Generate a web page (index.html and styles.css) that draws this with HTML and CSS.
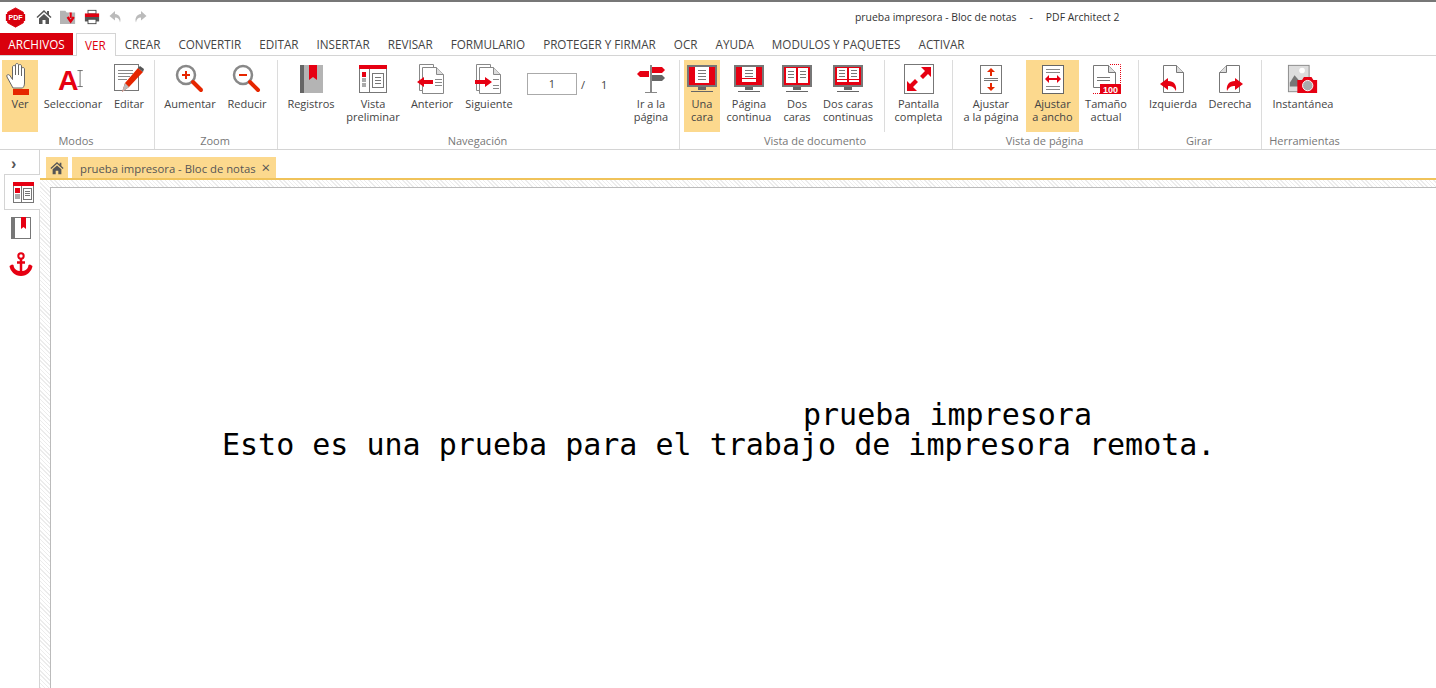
FILE: index.html
```html
<!DOCTYPE html>
<html lang="es">
<head>
  <meta charset="UTF-8" />
  <title>prueba impresora - Bloc de notas - PDF Architect 2</title>
  <link rel="stylesheet" href="styles.css">
</head>
<body>
  <svg class="sprites" width="0" height="0">
    <symbol id="i-house" viewBox="0 0 16 16"><path d="M8 1 0.5 8l1 1L8 3l6.500 6 1-1-2.500-2.300V2h-2v1.900z" fill="#555"/><path d="M3 9.500 8 5l5 4.500V15H9.500v-4h-3v4H3z" fill="#555"/></symbol>
  </svg>

  <!-- barra de titulo -->
  <div class="titlebar">
    <svg class="logo" viewBox="0 0 24 24"><path d="M12 1l9 5v12l-9 5-9-5V6z" fill="#d9000d" stroke="#d9000d" stroke-linejoin="round"/><rect x="1" y="8" width="22" height="8" fill="#d9000d"/><text x="12" y="15" class="logo-text">PDF</text></svg>
    <svg class="qa" viewBox="0 0 16 16"><use href="#i-house"/></svg>
    <svg class="qa" viewBox="0 0 18 16"><path d="M0 1h6l1.500 2H17v13H0z" fill="#b4b4b4"/><path d="M10 4h3v5h-3z" fill="#fff"/><path d="M12 3v6M8.500 8 12 13l3.500-5" fill="none" stroke="#e00010" stroke-width="2.500"/></svg>
    <svg class="qa" viewBox="0 0 18 16"><rect x="4.500" y="0.500" width="9" height="4" fill="#fff" stroke="#444"/><rect x="1" y="4" width="16" height="4" fill="#e00010"/><path d="M1 8h16v5H1z" fill="#555"/><rect x="4.500" y="10.500" width="9" height="5" fill="#fff" stroke="#444"/></svg>
    <svg class="qa" viewBox="0 0 16 16"><path d="M7 2 1.500 7 7 11.500V8.500c3 0 4.500 1.500 5 5 1.500-4-.5-8-5-8.500z" fill="#bbb"/></svg>
    <svg class="qa" viewBox="0 0 16 16"><path d="M9 2l5.500 5L9 11.500V8.500c-3 0-4.500 1.500-5 5-1.500-4 .5-8 5-8.500z" fill="#bbb"/></svg>
    <div class="window-title"><span>prueba impresora - Bloc de notas</span><span class="dash">-</span><span>PDF Architect 2</span></div>
  </div>

  <!-- pestanas -->
  <nav class="tabs">
    <span class="tab-file">ARCHIVOS</span>
    <span class="tab tab-on">VER</span>
    <span class="tab">CREAR</span>
    <span class="tab">CONVERTIR</span>
    <span class="tab">EDITAR</span>
    <span class="tab">INSERTAR</span>
    <span class="tab">REVISAR</span>
    <span class="tab">FORMULARIO</span>
    <span class="tab">PROTEGER Y FIRMAR</span>
    <span class="tab">OCR</span>
    <span class="tab">AYUDA</span>
    <span class="tab">MODULOS Y PAQUETES</span>
    <span class="tab">ACTIVAR</span>
  </nav>

  <!-- cinta -->
  <section class="ribbon">
    <div class="group g-modos">
      <div class="btns">
        <div class="btn w-ver on">
          <svg class="ico" viewBox="0 0 32 32"><path d="M9 25 3 14c-1-2 1-3 2.500-2l3 4.500V4c0-2 3-2 3 0v8-10c0-2 3-2 3 0v10-9c0-2 3-2 3 0v10-7c0-2 3-2 3 0v14c0 3-1 4-2 5z" fill="#fff" stroke="#666"/><rect x="9" y="26" width="16" height="6" fill="#e62600"/></svg>
          <span>Ver</span>
        </div>
        <div class="btn w-sel">
          <svg class="ico" viewBox="0 0 36 32"><text x="1" y="28" class="big-a">A</text><path d="M23 6.500h6M23 24.500h6M26 6v19" stroke="#666" fill="none"/></svg>
          <span>Seleccionar</span>
        </div>
        <div class="btn w-edit">
          <svg class="ico" viewBox="0 0 32 32"><rect x="1.500" y="1.500" width="24" height="26" fill="#fff" stroke="#777"/><path d="M5 7.500h15M5 10.500h15M5 13.500h12M5 16.500h9" stroke="#888"/><path d="M9 29l3-9L25 5l5 4-14 15z" fill="#e62600"/><path d="M9 29l3-9 4 4z" fill="#bbb"/><path d="M25 5l2-2 4 3-1 3z" fill="#555"/></svg>
          <span>Editar</span>
        </div>
      </div>
      <div class="group-name">Modos</div>
    </div>

    <div class="group g-zoom">
      <div class="btns">
        <div class="btn w-aum">
          <svg class="ico" viewBox="0 0 32 32"><circle cx="12" cy="12" r="9" fill="#fff" stroke="#888" stroke-width="2.500"/><path d="M12 8v8M8 12h8" stroke="#e62600" stroke-width="2"/><path d="M19 19l8 8" stroke="#e62600" stroke-width="4" stroke-linecap="round"/></svg>
          <span>Aumentar</span>
        </div>
        <div class="btn w-red">
          <svg class="ico" viewBox="0 0 32 32"><circle cx="12" cy="12" r="9" fill="#fff" stroke="#888" stroke-width="2.500"/><path d="M8 12h8" stroke="#e62600" stroke-width="2"/><path d="M19 19l8 8" stroke="#e62600" stroke-width="4" stroke-linecap="round"/></svg>
          <span>Reducir</span>
        </div>
      </div>
      <div class="group-name">Zoom</div>
    </div>

    <div class="group g-nav">
      <div class="btns">
        <div class="btn w-reg">
          <svg class="ico" viewBox="0 0 32 32"><rect x="5" y="2" width="23" height="28" fill="#b4b4b4"/><rect x="5" y="2" width="4" height="28" fill="#666"/><path d="M14 2h8v15l-4-3-4 3z" fill="#e60012"/></svg>
          <span>Registros</span>
        </div>
        <div class="btn w-prev">
          <svg class="ico" viewBox="0 0 32 32"><rect x="2.500" y="4.500" width="27" height="25" fill="#fff" stroke="#777"/><rect x="2" y="2" width="28" height="4" fill="#e60012"/><rect x="5" y="9" width="4" height="5" fill="#e60012"/><rect x="5" y="15" width="4" height="4" fill="#aaa"/><rect x="5" y="20" width="4" height="4" fill="#aaa"/><path d="M12.500 6v23" stroke="#777"/><rect x="15.500" y="10.500" width="11" height="14" fill="#fff" stroke="#777"/><path d="M18 14.500h6M18 17.500h6M18 20.500h6" stroke="#777"/></svg>
          <span>Vista<br>preliminar</span>
        </div>
        <div class="btn w-ant">
          <svg class="ico" viewBox="0 0 32 32"><path d="M3.500 1.500h14v26h-14z" fill="#fff" stroke="#888"/><path d="M6.500 4.500h14l7 7v19h-21z" fill="#fff" stroke="#888"/><path d="M20.500 4.500v7h7" fill="#ddd" stroke="#888"/><path d="M19 16.500h7M19 19.500h7M19 22.500h7" stroke="#888"/><path d="M1 19l7-5v3h9v4H8v3z" fill="#e60012"/></svg>
          <span>Anterior</span>
        </div>
        <div class="btn w-sig">
          <svg class="ico" viewBox="0 0 32 32"><path d="M3.500 1.500h14v26h-14z" fill="#fff" stroke="#888"/><path d="M6.500 4.500h14l7 7v19h-21z" fill="#fff" stroke="#888"/><path d="M20.500 4.500v7h7" fill="#ddd" stroke="#888"/><path d="M20 16.500h6M20 22.500h6M20 25.500h6" stroke="#888"/><path d="M2 17h10v-3l7 5-7 5v-3H2z" fill="#e60012"/></svg>
          <span>Siguiente</span>
        </div>
        <div class="pager"><span class="page-box">1</span><span class="slash">/</span><span class="page-total">1</span></div>
        <div class="btn w-ir">
          <svg class="ico" viewBox="0 0 32 32"><path d="M15 2h2v28h-2z" fill="#888"/><path d="M10 29.500h12" stroke="#888"/><path d="M17 4h10l3 3-3 3H17z" fill="#e60012"/><path d="M14 8H5l-3 3 3 3h9z" fill="#e60012"/><path d="M17 12h10l3 3-3 3H17z" fill="#666"/></svg>
          <span>Ir a la<br>página</span>
        </div>
      </div>
      <div class="group-name">Navegación</div>
    </div>

    <div class="group g-doc">
      <div class="btns">
        <div class="btn w-una on">
          <svg class="ico" viewBox="0 0 32 32"><rect x="1" y="2" width="30" height="22" fill="#777"/><rect x="3" y="4" width="26" height="18" fill="#e60012"/><rect x="9" y="4" width="14" height="16" fill="#fff"/><path d="M12 7.500h8M12 10.500h8M12 13.500h8M12 16.500h8" stroke="#777"/><path d="M12 24h8v3h-8z" fill="#666"/><path d="M5 28.500h22" stroke="#666"/></svg>
          <span>Una<br>cara</span>
        </div>
        <div class="btn w-pag">
          <svg class="ico" viewBox="0 0 32 32"><rect x="1" y="2" width="30" height="22" fill="#777"/><rect x="3" y="4" width="26" height="18" fill="#e60012"/><rect x="9" y="4" width="14" height="11" fill="#fff"/><rect x="9" y="16" width="14" height="3" fill="#fff"/><path d="M12 7.500h8M12 10.500h8M12 13.500h8" stroke="#777"/><path d="M12 24h8v3h-8z" fill="#666"/><path d="M5 28.500h22" stroke="#666"/></svg>
          <span>Página<br>continua</span>
        </div>
        <div class="btn w-dos">
          <svg class="ico" viewBox="0 0 32 32"><rect x="1" y="2" width="30" height="22" fill="#777"/><rect x="3" y="4" width="26" height="18" fill="#e60012"/><rect x="5" y="5" width="10" height="15" fill="#fff"/><rect x="17" y="5" width="10" height="15" fill="#fff"/><path d="M7 8.500h6M7 11.500h6M7 14.500h6M19 8.500h6M19 11.500h6M19 14.500h6" stroke="#777"/><path d="M12 24h8v3h-8z" fill="#666"/><path d="M5 28.500h22" stroke="#666"/></svg>
          <span>Dos<br>caras</span>
        </div>
        <div class="btn w-dosc">
          <svg class="ico" viewBox="0 0 32 32"><rect x="1" y="2" width="30" height="22" fill="#777"/><rect x="3" y="4" width="26" height="18" fill="#e60012"/><rect x="5" y="5" width="10" height="11" fill="#fff"/><rect x="17" y="5" width="10" height="11" fill="#fff"/><rect x="5" y="17" width="10" height="2" fill="#fff"/><rect x="17" y="17" width="10" height="2" fill="#fff"/><path d="M7 7.500h6M7 10.500h6M7 13.500h6M19 7.500h6M19 10.500h6M19 13.500h6" stroke="#777"/><path d="M12 24h8v3h-8z" fill="#666"/><path d="M5 28.500h22" stroke="#666"/></svg>
          <span>Dos caras<br>continuas</span>
        </div>
        <div class="btn w-pant">
          <svg class="ico" viewBox="0 0 32 32"><rect x="1.500" y="1.500" width="29" height="29" fill="#fff" stroke="#777"/><path d="M18 4h10v10l-3-3-5 5-3-3 5-5zM14 28H4V18l3 3 5-5 3 3-5 5z" fill="#e60012"/></svg>
          <span>Pantalla<br>completa</span>
        </div>
      </div>
      <div class="group-name">Vista de documento</div>
    </div>

    <div class="group g-pag">
      <div class="btns">
        <div class="btn w-ajp">
          <svg class="ico" viewBox="0 0 32 32"><rect x="5.500" y="2.500" width="21" height="28" fill="#fff" stroke="#777"/><path d="M9 15.500h14M9 17.500h14" stroke="#777"/><path d="M16 5l4 4h-3v4h-2V9h-3zM16 28l4-4h-3v-4h-2v4h-3z" fill="#e62600"/></svg>
          <span>Ajustar<br>a la página</span>
        </div>
        <div class="btn w-aja on">
          <svg class="ico" viewBox="0 0 32 32"><rect x="5.500" y="2.500" width="21" height="28" fill="#fff" stroke="#666"/><path d="M9 6.500h14M9 9.500h14M9 23.500h14M9 26.500h14" stroke="#888"/><path d="M8 16l4-4v3h8v-3l4 4-4 4v-3h-8v3z" fill="#e60012"/></svg>
          <span>Ajustar<br>a ancho</span>
        </div>
        <div class="btn w-tam">
          <svg class="ico" viewBox="0 0 32 32"><path d="M3.500 2.500h15l7 7v15h-22z" fill="#fff" stroke="#777"/><path d="M18.500 2.500v7h7" fill="#ddd" stroke="#777"/><path d="M7 14.500h13M7 17.500h13" stroke="#777"/><path d="M20 1.500h10.500V20M3 30.500h7" fill="none" stroke="#e60012" stroke-dasharray="1 1"/><rect x="10" y="21" width="21" height="10" fill="#e60012"/><text x="20.500" y="29.500" class="hundred">100</text></svg>
          <span>Tamaño<br>actual</span>
        </div>
      </div>
      <div class="group-name">Vista de página</div>
    </div>

    <div class="group g-girar">
      <div class="btns">
        <div class="btn w-izq">
          <svg class="ico" viewBox="0 0 32 32"><path d="M6.500 2.500h13l7 7v20h-20z" fill="#fff" stroke="#777"/><path d="M19.500 2.500v7h7" fill="#ddd" stroke="#777"/><path d="M11 15l-8 6 8 6v-4c4 0 6 1 8 5 1-6-2-10-8-10z" fill="#e60012"/></svg>
          <span>Izquierda</span>
        </div>
        <div class="btn w-der">
          <svg class="ico" viewBox="0 0 32 32"><path d="M12.500 2.500h13v27h-20v-20z" fill="#fff" stroke="#777"/><path d="M12.500 2.500v7h-7" fill="#ddd" stroke="#777"/><path d="M21 15l8 6-8 6v-4c-4 0-6 1-8 5-1-6 2-10 8-10z" fill="#e60012"/></svg>
          <span>Derecha</span>
        </div>
      </div>
      <div class="group-name">Girar</div>
    </div>

    <div class="group g-herr">
      <div class="btns">
        <div class="btn w-inst">
          <svg class="ico" viewBox="0 0 34 32"><rect x="1.500" y="1.500" width="22" height="28" fill="#ddd" stroke="#888"/><circle cx="16" cy="7" r="3" fill="#fff"/><path d="M3 20l5-8 6 7v5H3z" fill="#777"/><path d="M11 17h5l2-3h8l2 3h4v14H11z" fill="#e60012"/><circle cx="22" cy="23" r="5.500" fill="#aaa" stroke="#fff"/></svg>
          <span>Instantánea</span>
        </div>
      </div>
      <div class="group-name">Herramientas</div>
    </div>
  </section>

  <div class="workspace">
    <!-- panel lateral -->
    <aside class="side">
      <div class="side-toggle">›</div>
      <div class="side-item side-on">
        <svg class="side-ico" viewBox="0 0 24 24"><rect x="2.500" y="4.500" width="20" height="18" fill="#fff" stroke="#777"/><rect x="2" y="2" width="21" height="4" fill="#e60012"/><rect x="4" y="8" width="5" height="5" fill="#e60012"/><rect x="4" y="14" width="5" height="5" fill="#aaa"/><path d="M10.500 6v16" stroke="#777"/><rect x="12.500" y="8.500" width="8" height="11" fill="#fff" stroke="#777"/><path d="M14 11.500h5M14 13.500h5M14 15.500h5" stroke="#777"/></svg>
      </div>
      <div class="side-item">
        <svg class="side-ico" viewBox="0 0 24 24"><rect x="2" y="1" width="3" height="22" fill="#777"/><rect x="5.500" y="1.500" width="16" height="21" fill="#fff" stroke="#777"/><path d="M12 1h5v12l-2.500-2-2.500 2z" fill="#e60012"/></svg>
      </div>
      <div class="side-item">
        <svg class="side-ico" viewBox="0 0 24 24"><circle cx="12" cy="4" r="2.700" fill="none" stroke="#e60012" stroke-width="2"/><path d="M12 6.500V22M8 10.500h8" stroke="#e60012" stroke-width="2.500"/><path d="M0.500 14l2.500-1.500 1.500.5c.5 4 3 6 7.500 6s7-2 7.500-6l1.500-.5L23.500 14c-.5 5-5.500 10-11.500 10S1 19 .5 14z" fill="#e60012"/></svg>
      </div>
    </aside>

    <main class="doc-area">
      <div class="doc-tabs">
        <span class="doc-home"><svg class="doc-home-ico" viewBox="0 0 16 16"><use href="#i-house"/></svg></span>
        <span class="doc-tab">prueba impresora - Bloc de notas<b class="close">×</b></span>
      </div>
      <div class="doc-back">
        <div class="page">
          <p class="print-title">prueba impresora</p>
          <p class="print-line">Esto es una prueba para el trabajo de impresora remota.</p>
        </div>
      </div>
    </main>
  </div>
</body>
</html>
```

FILE: styles.css
```css
* {
  box-sizing: border-box;
}
html, body {
  height: 100%;
}
body {
  margin: 0;
  overflow: hidden;
  display: flex;
  flex-direction: column;
  background: #fff;
  color: #444;
  font-family: "Open Sans", "Noto Sans", sans-serif;
  font-size: 11px;
}
.sprites {
  position: absolute;
}

/* barra de titulo */
.titlebar {
  height: 33px;
  flex: none;
  display: flex;
  align-items: center;
  padding: 0 0 1px 5px;
  border-top: 2px solid #777;
}
.logo {
  width: 21px;
  height: 21px;
  margin-right: 10px;
}
.logo-text {
  fill: #fff;
  font: bold 8px "Liberation Sans", sans-serif;
  text-anchor: middle;
}
.qa {
  width: 16px;
  height: 16px;
  margin-right: 8px;
}
.window-title {
  margin-left: 699px;
  display: flex;
  font-size: 10.4px;
  color: #333;
}
.dash {
  margin: 0 13px;
}

/* pestanas */
.tabs {
  height: 23px;
  flex: none;
  display: flex;
  border-bottom: 1px solid #d4d4d4;
  font-size: 11.7px;
  color: #444;
}
.tab-file {
  width: 73px;
  height: 22px;
  background: #d9000d;
  color: #fff;
  text-align: center;
  line-height: 22px;
}
.tab {
  line-height: 22px;
  padding: 0 9px;
}
.tab-on {
  margin: 0 0 -1px 3px;
  height: 23px;
  padding: 0 9px 0 8px;
  color: #e0000d;
  background: #fff;
  border: 1px solid #d4d4d4;
  border-bottom: none;
}

/* cinta */
.ribbon {
  height: 94px;
  flex: none;
  display: flex;
  padding-top: 4px;
  border-bottom: 1px solid #d4d4d4;
}
.group {
  display: flex;
  flex-direction: column;
  border-right: 1px solid #dcdcdc;
}
.g-modos { width: 155px; }
.g-zoom { width: 123px; }
.g-nav { width: 402px; }
.g-doc { width: 273px; }
.g-pag { width: 186px; }
.g-girar { width: 123px; }
.g-herr { width: 87px; border-right: none; }
.btns {
  height: 73px;
  display: flex;
}
.g-modos .btns { padding-left: 2px; }
.g-zoom .btns { padding-left: 5px; }
.g-nav .btns { padding-left: 3px; }
.g-doc .btns { padding-left: 4px; }
.g-pag .btns { padding-left: 5px; }
.g-girar .btns { padding-left: 5px; }
.g-herr .btns { padding-left: 5px; }
.group-name {
  text-align: center;
  color: #777;
  font-size: 11px;
  line-height: 16px;
  padding-right: 2px;
  white-space: nowrap;
}
.btn {
  display: flex;
  flex-direction: column;
  align-items: center;
  text-align: center;
  line-height: 13px;
  padding-top: 3px;
  height: 72px;
  flex: none;
}
.btn.on {
  background: #fcd98e;
}
.ico {
  width: 32px;
  height: 32px;
  margin-bottom: 2px;
  flex: none;
}
.w-ver { width: 36px; margin-right: 3px; }
.w-sel { width: 64px; margin-right: 3px; }
.w-edit { width: 42px; }
.w-aum { width: 60px; margin-right: 2px; }
.w-red { width: 50px; }
.w-reg { width: 60px; }
.w-prev { width: 64px; }
.w-ant { width: 54px; }
.w-sig { width: 60px; }
.w-ir { width: 48px; }
.w-una { width: 36px; }
.w-pag { width: 58px; }
.w-dos { width: 38px; }
.w-dosc { width: 64px; margin-right: 4px; }
.w-pant { width: 68px; border-left: 1px solid #dcdcdc; }
.w-ajp { width: 66px; margin-right: 2px; }
.w-aja { width: 53px; }
.w-tam { width: 54px; }
.w-izq { width: 58px; }
.w-der { width: 56px; }
.w-inst { width: 72px; }

.pager {
  width: 108px;
  display: flex;
  align-items: flex-start;
  padding: 13px 0 0 8px;
}
.page-box {
  width: 50px;
  height: 22px;
  border: 1px solid #aaa;
  text-align: center;
  line-height: 20px;
}
.slash {
  margin: 4px 0 0 4px;
}
.page-total {
  margin: 4px 0 0 16px;
}

/* area de trabajo */
.workspace {
  flex: 1;
  min-height: 0;
  display: flex;
}
.side {
  width: 40px;
  flex: none;
  border-right: 1px solid #d4d4d4;
  padding-top: 7px;
}
.side-toggle {
  height: 17px;
  padding-left: 11px;
  font: bold 16px/14px "Liberation Sans", sans-serif;
  color: #555;
}
.side-item {
  height: 36px;
  display: flex;
  align-items: center;
  justify-content: center;
  padding-left: 2px;
}
.side-on {
  margin: 0 -1px 0 4px;
  padding-left: 0;
  background: #fff;
  border: 1px solid #d4d4d4;
  border-right: none;
}
.side-ico {
  width: 24px;
  height: 24px;
}
.doc-area {
  flex: 1;
  min-width: 0;
  display: flex;
  flex-direction: column;
}
.doc-tabs {
  height: 30px;
  flex: none;
  display: flex;
  align-items: flex-end;
  padding-left: 6px;
  gap: 4px;
  border-bottom: 2px solid #f0c35a;
}
.doc-home {
  width: 22px;
  height: 21px;
  background: #fcd98e;
  display: flex;
  align-items: center;
  justify-content: center;
}
.doc-home-ico {
  width: 14px;
  height: 14px;
}
.doc-tab {
  height: 21px;
  line-height: 21px;
  padding: 0 6px 0 8px;
  background: #fcd98e;
  color: #555;
  font-size: 11.3px;
}
.close {
  margin-left: 6px;
  font-weight: normal;
  font-size: 15px;
}
.doc-back {
  flex: 1;
  min-height: 0;
  padding: 7px 0 0 10px;
  background: repeating-linear-gradient(45deg, #ececec 0 1px, #fff 1px 3px);
}
.page {
  height: 100%;
  background: #fff;
  border-top: 1px solid #bbb;
  border-left: 1px solid #bbb;
  padding-top: 212px;
  font-family: "DejaVu Sans Mono", monospace;
  font-size: 30px;
  line-height: 30px;
  color: #000;
}
.page p {
  margin: 0;
  white-space: pre;
}
.print-title {
  padding-left: 752px;
}
.print-line {
  padding-left: 171px;
}
.big-a {
  font: bold 32px "Liberation Sans", sans-serif;
  fill: #e60012;
}
.hundred {
  font: bold 9px "Liberation Sans", sans-serif;
  fill: #fff;
  text-anchor: middle;
}
```
